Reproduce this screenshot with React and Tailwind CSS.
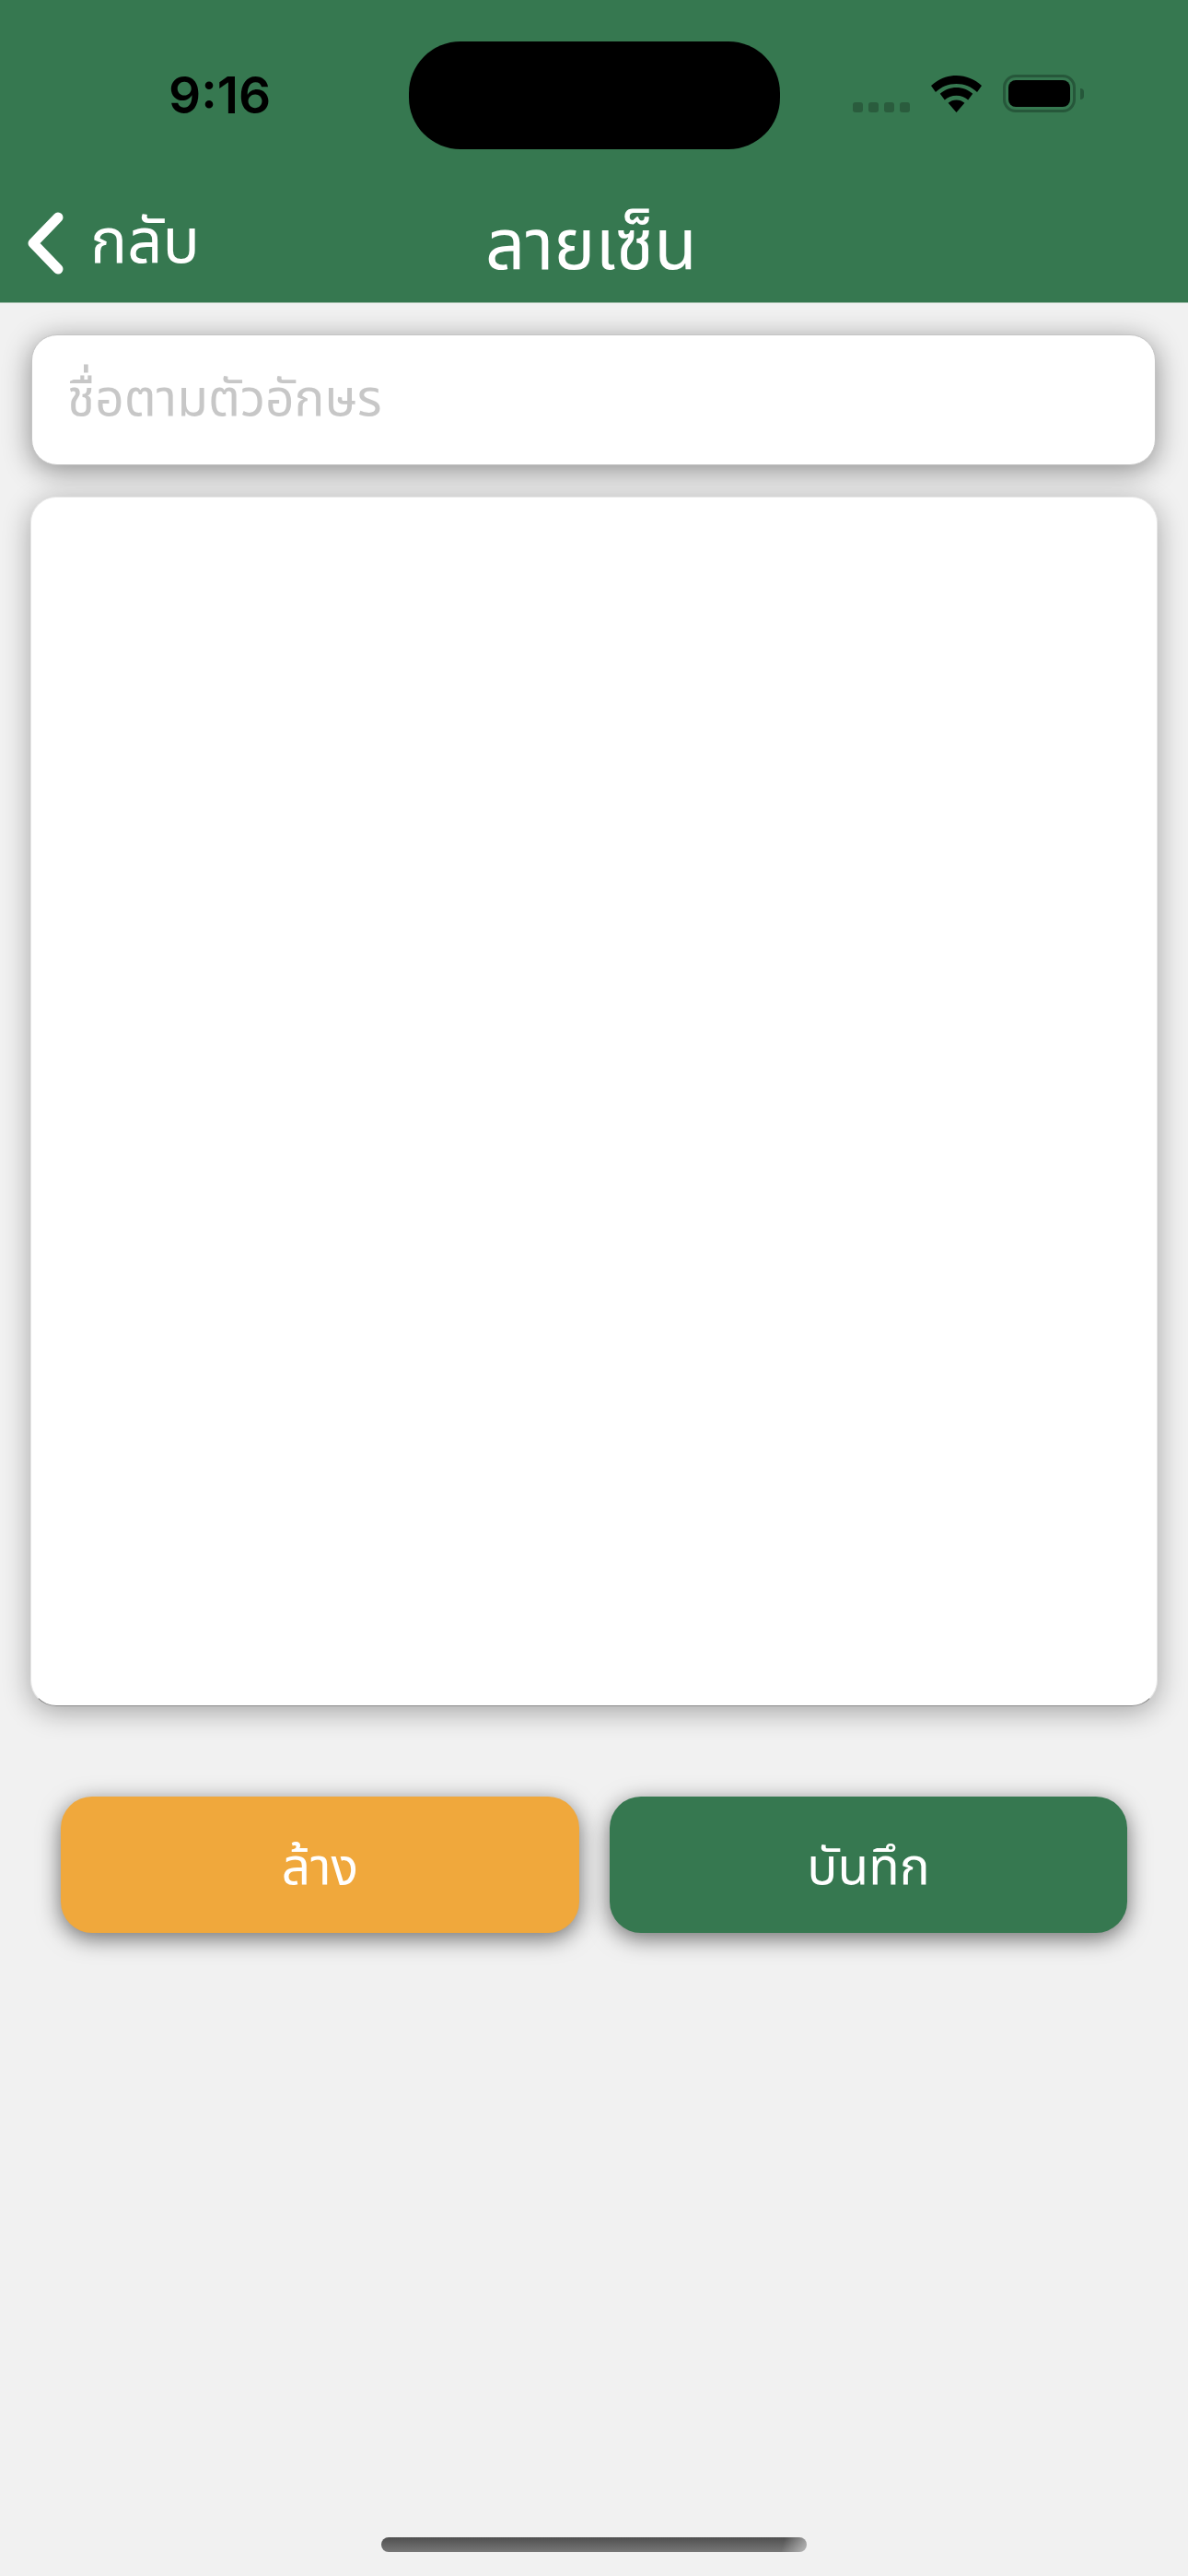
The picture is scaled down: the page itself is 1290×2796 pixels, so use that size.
const THAI_FONT = "font-['Noto_Sans_Thai','Noto_Sans','Noto_Sans_CJK_SC','DejaVu_Sans',sans-serif]"

function WifiIcon() {
  return (
    <svg width="55" height="40" viewBox="0 0 55 40" fill="black">
      <path d="M27.5 0C17 0 7.5 4 0 11l5 7c6-5.800 14-9 22.500-9s16.500 3.200 22.500 9l5-7C47.500 4 38 0 27.500 0Z" />
      <path d="M27.500 13c-6.800 0-13 2.500-17.700 6.800l5 6.800c3.300-3 7.800-4.800 12.700-4.800s9.400 1.800 12.700 4.800l5-6.800C40.500 15.500 34.300 13 27.500 13Z" />
      <path d="M27.500 26.500c-3.400 0-6.500 1.200-8.900 3.300L27.500 40l8.900-10.200c-2.400-2.100-5.500-3.300-8.900-3.300Z" />
    </svg>
  )
}

function BatteryIcon() {
  return (
    <div className="flex items-center gap-[5px]">
      <div className="w-[79px] h-[41px] rounded-[14px] border-[3px] border-[#26573a] p-[3px]">
        <div className="w-full h-full rounded-[8px] bg-black" />
      </div>
      <div className="w-[4px] h-[12px] rounded-r-full bg-[#26573a]" />
    </div>
  )
}

function StatusBar() {
  return (
    <div className="h-[162px] pt-[45px] pl-[183px] flex items-start">
      <div className="w-[261px] h-[117px] flex items-center">
        <span className="font-['Inter',sans-serif] font-semibold text-[55px] leading-none text-black">9:16</span>
      </div>
      <div className="w-[403px] h-[117px] rounded-[56px] bg-black" />
      <div className="ml-[79px] flex items-end gap-[23px] pt-[36px] h-[77px]">
        <div className="flex gap-[6px]">
          <div className="w-[11px] h-[11px] rounded-[3px] bg-[#2a5c3d]" />
          <div className="w-[11px] h-[11px] rounded-[3px] bg-[#2a5c3d]" />
          <div className="w-[11px] h-[11px] rounded-[3px] bg-[#2a5c3d]" />
          <div className="w-[11px] h-[11px] rounded-[3px] bg-[#2a5c3d]" />
        </div>
        <WifiIcon />
        <BatteryIcon />
      </div>
    </div>
  )
}

function NavBar() {
  return (
    <div className="relative h-[166px] flex items-start pl-[30px] pt-[68px] text-white">
      <div className="flex items-center gap-[28px]">
        <svg width="40" height="68" viewBox="0 0 40 68" fill="none" stroke="white" strokeWidth="11" strokeLinecap="round" strokeLinejoin="round">
          <path d="M33 6 6 34l27 28" />
        </svg>
        <span className={`${THAI_FONT} text-[67px] leading-none`}>กลับ</span>
      </div>
      <span className={`${THAI_FONT} absolute left-[527px] top-[69px] text-[76px] leading-none`}>ลายเซ็น</span>
    </div>
  )
}

export default function App() {
  return (
    <div className={`w-[1290px] h-[2796px] bg-[#f1f1f1] flex flex-col ${THAI_FONT}`}>
      <div className="h-[329px] bg-[#367850] border-b border-[#9dbba8]">
        <StatusBar />
        <NavBar />
      </div>

      <div className="flex-1 flex flex-col">
        <div className="mt-[34px] ml-[34px] w-[1221px] h-[142px] rounded-[28px] bg-white border border-[#c4c4c4] shadow-[0_6px_30px_rgba(0,0,0,0.42)] flex items-center pl-[38px]">
          <span className="text-[55px] leading-none text-[#c7c7c7]">ชื่อตามตัวอักษร</span>
        </div>

        <div className="mt-[34px] ml-[33px] w-[1224px] h-[1313px] rounded-[28px] bg-white border border-[#e6e6e6] border-b-[#8a8a8a] shadow-[0_6px_30px_rgba(0,0,0,0.32)]" />

        <div className="mt-[98px] ml-[66px] flex gap-[33px]">
          <button type="button" className="w-[563px] h-[148px] rounded-[34px] bg-[#f0a83c] text-white text-[55px] pt-[11px] shadow-[0_6px_24px_rgba(0,0,0,0.55)]">
            ล้าง
          </button>
          <button type="button" className="w-[562px] h-[148px] rounded-[34px] bg-[#367850] text-white text-[55px] pt-[11px] shadow-[0_6px_24px_rgba(0,0,0,0.55)]">
            บันทึก
          </button>
        </div>

        <div className="mt-auto mb-[26px] self-center w-[462px] h-[16px] rounded-full bg-[linear-gradient(105deg,transparent_94%,rgba(241,241,241,0.55)),linear-gradient(#4f4f4f,#777777)]" />
      </div>
    </div>
  )
}
